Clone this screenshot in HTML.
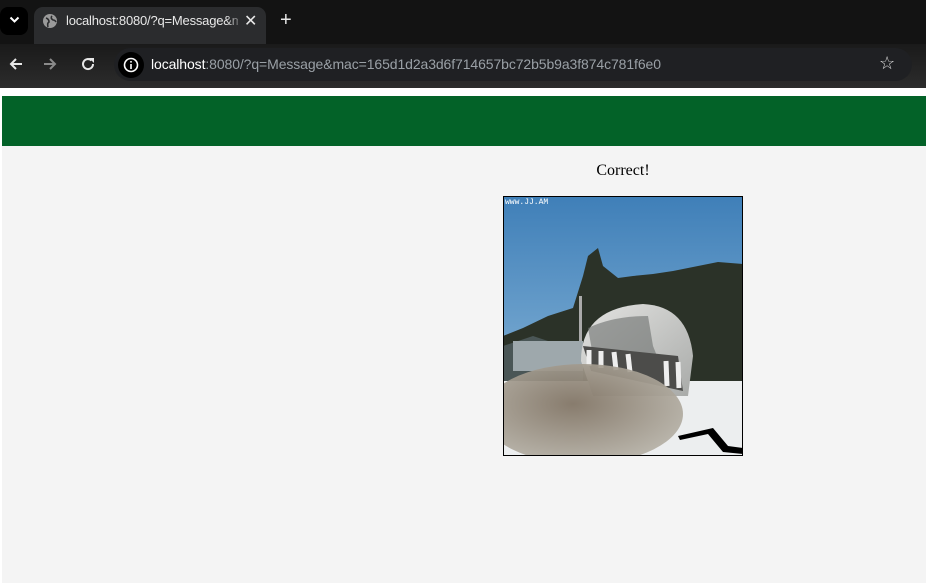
<!DOCTYPE html>
<html><head><meta charset="utf-8"><style>
*{margin:0;padding:0;box-sizing:border-box}
body{width:926px;height:583px;overflow:hidden;background:#fff;font-family:"Liberation Sans",sans-serif;position:relative}
.abs{position:absolute}
</style></head><body>
<div class="abs" style="left:0;top:0;width:926px;height:44px;background:#131313"></div>
<div class="abs" style="left:0;top:7px;width:28px;height:28px;background:#000;border-radius:8px"></div>
<svg class="abs" style="left:9px;top:16px" width="11" height="8"><path d="M1.5 1.5 L5.5 5.5 L9.5 1.5" stroke="#fff" stroke-width="2" fill="none"/></svg>
<div class="abs" style="left:34px;top:7px;width:232px;height:37px;background:#2b2c2e;border-radius:9px 9px 0 0"></div>
<svg class="abs" style="left:43px;top:14px" width="14" height="14"><circle cx="7" cy="7" r="7" fill="#9a9a9a"/><path d="M3 4 q3 1 3 4 q-2 1 -1 5 M9 2 q-2 2 1 4 q2 0 3 2" stroke="#2b2c2e" stroke-width="1.6" fill="none"/></svg>
<div class="abs" style="left:66px;top:13px;font-size:13px;color:#e8e8e8;white-space:nowrap;width:172px;overflow:hidden;letter-spacing:-0.2px">localhost:8080/?q=Message&amp;mac</div>
<div class="abs" style="left:226px;top:8px;width:18px;height:24px;background:linear-gradient(90deg,rgba(43,44,46,0),#2b2c2e)"></div>
<div class="abs" style="left:244px;top:11px;font-size:16px;color:#e8e8e8">✕</div>
<div class="abs" style="left:280px;top:9px;font-size:20px;color:#e8e8e8">+</div>
<div class="abs" style="left:0;top:44px;width:926px;height:44px;background:linear-gradient(#1a1a1a,#2c2c2c)"></div>
<svg class="abs" style="left:8px;top:56px" width="16" height="16"><path d="M14 8 H3 M8 3 L3 8 L8 13" stroke="#e8e8e8" stroke-width="2" fill="none"/></svg>
<svg class="abs" style="left:42px;top:56px" width="16" height="16"><path d="M2 8 H13 M8 3 L13 8 L8 13" stroke="#8a8a8a" stroke-width="2" fill="none"/></svg>
<svg class="abs" style="left:80px;top:56px" width="16" height="16"><path d="M13 8 A5 5 0 1 1 11.5 4.5" stroke="#e8e8e8" stroke-width="2" fill="none"/><path d="M9 2 L14 2 L14 7 Z" fill="#e8e8e8"/></svg>
<div class="abs" style="left:114px;top:48px;width:798px;height:33px;background:#1f2023;border-radius:17px"></div>
<div class="abs" style="left:118px;top:52px;width:26px;height:26px;background:#000;border-radius:13px"></div>
<svg class="abs" style="left:123px;top:57px" width="16" height="16"><circle cx="8" cy="8" r="6.5" stroke="#fff" stroke-width="1.6" fill="none"/><rect x="7.2" y="7" width="1.6" height="5" fill="#fff"/><rect x="7.2" y="4" width="1.6" height="1.6" fill="#fff"/></svg>
<div class="abs" style="left:151px;top:56px;font-size:14px;color:#9aa0a6;white-space:nowrap;letter-spacing:-0.1px"><span style="color:#fff">localhost</span>:8080/?q=Message&amp;mac=165d1d2a3d6f714657bc72b5b9a3f874c781f6e0</div>
<div class="abs" style="left:879px;top:53px;font-size:18px;color:#ddd">☆</div>
<div class="abs" style="left:0;top:88px;width:926px;height:8px;background:#fff"></div>
<div class="abs" style="left:2px;top:96px;width:924px;height:50px;background:#036228"></div>
<div class="abs" style="left:2px;top:146px;width:924px;height:437px;background:#f4f4f4"></div>
<div class="abs" style="left:503px;top:162px;width:240px;text-align:center;font-family:'Liberation Serif',serif;font-size:16px;color:#000">Correct!</div>
<svg class="abs" style="left:503px;top:196px" width="240" height="260">
<defs><linearGradient id="sky" x1="0" y1="0" x2="0" y2="1"><stop offset="0" stop-color="#3f7fb8"/><stop offset="0.5" stop-color="#6a9fcb"/><stop offset="1" stop-color="#a0bfd6"/></linearGradient>
<radialGradient id="dust" cx="0.45" cy="0.4" r="0.6"><stop offset="0" stop-color="#7f7262"/><stop offset="1" stop-color="#b4afa4"/></radialGradient>
<linearGradient id="dome" x1="0" y1="0" x2="1" y2="1"><stop offset="0" stop-color="#e4e4e2"/><stop offset="1" stop-color="#a8aaa8"/></linearGradient></defs>
<rect width="240" height="260" fill="url(#sky)"/>
<path d="M0 140 L20 132 L45 120 L70 112 L80 80 L85 60 L95 52 L100 70 L115 82 L130 80 L150 78 L170 75 L195 70 L215 66 L240 68 L240 200 L0 200 Z" fill="#2b3228"/>
<path d="M0 150 L30 140 L60 150 L80 160 L80 200 L0 200Z" fill="#4a5656"/>
<rect x="76" y="100" width="3" height="60" fill="#aaa"/>
<rect x="10" y="145" width="70" height="30" fill="#9ea8ac"/>
<rect x="0" y="185" width="240" height="75" fill="#eceeef"/>
<path d="M78 165 Q78 112 140 108 Q185 110 190 160 L185 200 L90 200 Z" fill="url(#dome)"/>
<path d="M85 132 Q110 120 145 120 L150 150 L160 175 L90 160 Z" fill="#6c706e" opacity="0.6"/>
<path d="M80 150 L175 160 L180 195 L88 175 Z" fill="#4c4c4a"/>
<g stroke="#eee" stroke-width="5"><line x1="86" y1="154" x2="86" y2="170"/><line x1="98" y1="155" x2="98" y2="172"/><line x1="111" y1="156" x2="113" y2="174"/><line x1="125" y1="158" x2="127" y2="176"/><line x1="163" y1="165" x2="164" y2="190"/><line x1="175" y1="166" x2="176" y2="192"/></g>
<ellipse cx="80" cy="218" rx="100" ry="50" fill="url(#dust)" opacity="0.92"/>
<path d="M175 240 L210 232 L225 250 L240 252 L240 258 L220 256 L205 238 L177 244Z" fill="#000"/>
<text x="2" y="8" font-size="8" fill="#fff" font-family="Liberation Mono,monospace">www.JJ.AM</text>
<rect x="0.5" y="0.5" width="239" height="259" fill="none" stroke="#000"/>
</svg>
</body></html>
